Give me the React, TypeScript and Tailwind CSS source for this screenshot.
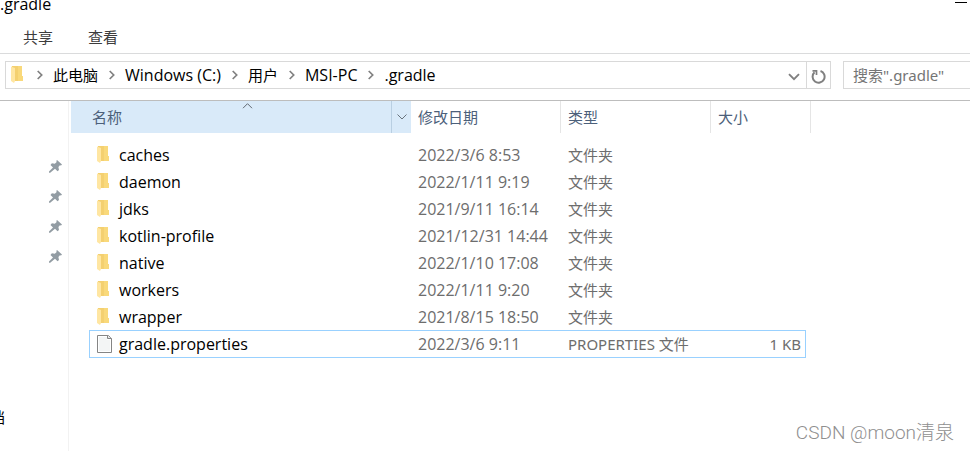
import React from "react";

type Entry = { name: string; date: string; type: string; size?: string; file?: boolean };

const entries: Entry[] = [
  { name: "caches", date: "2022/3/6 8:53", type: "文件夹" },
  { name: "daemon", date: "2022/1/11 9:19", type: "文件夹" },
  { name: "jdks", date: "2021/9/11 16:14", type: "文件夹" },
  { name: "kotlin-profile", date: "2021/12/31 14:44", type: "文件夹" },
  { name: "native", date: "2022/1/10 17:08", type: "文件夹" },
  { name: "workers", date: "2022/1/11 9:20", type: "文件夹" },
  { name: "wrapper", date: "2021/8/15 18:50", type: "文件夹" },
  { name: "gradle.properties", date: "2022/3/6 9:11", type: "PROPERTIES 文件", size: "1 KB", file: true },
];

const crumbs = [
  { label: "此电脑", size: "text-[15px]" },
  { label: "Windows (C:)", size: "text-[16px]" },
  { label: "用户", size: "text-[15px]" },
  { label: "MSI-PC", size: "text-[16px]" },
  { label: ".gradle", size: "text-[16px]" },
];

function FolderIcon() {
  return (
    <svg className="shrink-0" width="13" height="18" viewBox="0 0 13 18" aria-hidden="true">
      <path d="M1 0h10v10h1v5H1z" fill="#f4d070" />
      <path d="M7 0h4v10h1v5H7z" fill="#f9d97b" />
      <path d="M0 0.500l4 1.500v13l-1 2L0 15z" fill="#ffe6a2" />
    </svg>
  );
}

function FileIcon() {
  return (
    <svg className="shrink-0" width="15" height="18" viewBox="0 0 15 18" aria-hidden="true">
      <path d="M0.500 0.500h11l3 3v14h-14z" fill="#fff" stroke="#858585" />
      <path d="M2 2h8v3h3v11H2z" fill="#f3f5f5" />
      <path d="M10.500 0.500v3h4" fill="#e6e6e6" stroke="#858585" />
    </svg>
  );
}

function PinIcon() {
  return (
    <svg width="13" height="13" viewBox="0 0 13 13" aria-hidden="true">
      <path
        d="M8 0l5 4.500-1 0.900-1.100-0.200-1.500 1.700 0.600 3-1.500 1.400-2.500-2.500L1.200 12.800H0V11.600l4-4.100L1.500 5l1.400-1.700 2.900 0.500 1.900-1.700-0.400-1.200z"
        fill="#929ca3"
      />
    </svg>
  );
}

function Chevron() {
  return (
    <svg className="shrink-0" width="6" height="10" viewBox="0 0 6 10" fill="none" aria-hidden="true">
      <path d="M0.700 1l4 4-4 4" stroke="#808080" strokeWidth="1.700" />
    </svg>
  );
}

export default function App() {
  return (
    <div className="flex min-h-screen flex-col overflow-hidden bg-white font-['Open_Sans','Noto_Sans_CJK_SC',sans-serif] text-[15px] leading-5 text-black">
      <header className="flex h-5 items-start justify-between pr-[3px]">
        <h1 className="-mt-1.5 text-[16px] leading-5">.gradle</h1>
        <button type="button" aria-label="最小化" className="flex h-[3px] w-3 items-end">
          <span className="h-px w-full bg-black" />
        </button>
      </header>

      <nav className="flex h-[34px] items-center gap-[35px] border-b border-[#dadbdc] pl-[23px] text-[#3c3c3c]">
        <button type="button">共享</button>
        <button type="button">查看</button>
      </nav>

      <div className="flex h-[47px] items-center gap-3 border-b border-[#bdbdbd] pb-1 pl-[5px]">
        <div className="flex h-7 flex-1 items-center border border-[#d9d9d9]">
          <div className="flex flex-1 items-center pl-[5px]">
            <FolderIcon />
            <ol className="flex items-center gap-[11px] pl-[13px]">
              {crumbs.map((crumb) => (
                <li key={crumb.label} className="flex items-center gap-2.5">
                  <Chevron />
                  <button type="button" className={crumb.size}>
                    {crumb.label}
                  </button>
                </li>
              ))}
            </ol>
          </div>
          <button type="button" aria-label="历史记录" className="flex h-full w-6 items-center justify-center pt-1">
            <svg width="12" height="8" viewBox="0 0 12 8" fill="none" aria-hidden="true">
              <path d="M1 1.200l5 5 5-5" stroke="#808080" strokeWidth="1.900" />
            </svg>
          </button>
          <button
            type="button"
            aria-label="刷新"
            className="flex h-full w-6 items-center justify-center border-l border-[#d9d9d9] pt-0.5"
          >
            <svg width="15" height="15" viewBox="0 0 15 15" fill="none" aria-hidden="true">
              <path d="M9.500 2a6 6 0 1 1-6 1.300" stroke="#808080" strokeWidth="2" />
              <path d="M1.500 1.800h4V6" stroke="#808080" strokeWidth="1.700" />
            </svg>
          </button>
        </div>
        <input
          type="search"
          aria-label="搜索"
          placeholder={'搜索".gradle"'}
          className="h-7 w-[127px] border border-r-0 border-[#d9d9d9] pl-[9px] font-['Noto_Sans','Noto_Sans_CJK_SC',sans-serif] placeholder:text-[#757575]"
        />
      </div>

      <main className="flex flex-1">
        <aside className="flex w-[69px] shrink-0 flex-col overflow-hidden border-r border-[#f2f2f2] pt-[50px]">
          <ul>
            {[1, 2, 3, 4].map((n) => (
              <li key={n} className="flex h-[30px] items-center justify-end pr-1.5">
                <PinIcon />
              </li>
            ))}
          </ul>
          <div className="mt-[136px] flex w-[5px] justify-end overflow-hidden whitespace-nowrap">文档</div>
        </aside>

        <section className="flex flex-1 flex-col pl-0.5">
          <table className="w-[740px] table-fixed border-separate border-spacing-0 text-left">
            <colgroup>
              <col className="w-[340px]" />
              <col className="w-[150px]" />
              <col className="w-[150px]" />
              <col className="w-[100px]" />
            </colgroup>
            <thead className="text-[#4c607a]">
              <tr className="h-8">
                <th className="bg-[#d9eaf9] p-0 font-normal">
                  <div className="relative flex h-8 items-center">
                    <span className="flex-1 pl-[21px]">名称</span>
                    <svg
                      className="absolute left-[171px] top-0.5"
                      width="11"
                      height="6"
                      viewBox="0 0 11 6"
                      fill="none"
                      aria-hidden="true"
                    >
                      <path d="M1 5.200l4.500-4.500L10 5.200" stroke="#606870" />
                    </svg>
                    <button
                      type="button"
                      aria-label="筛选名称"
                      className="flex h-full w-5 items-center justify-center border-l border-[#b9cfe2]"
                    >
                      <svg width="10" height="6" viewBox="0 0 10 6" fill="none" aria-hidden="true">
                        <path d="M0.500 0.500L5 5l4.500-4.500" stroke="#68737d" />
                      </svg>
                    </button>
                  </div>
                </th>
                <th className="border-r border-[#e5e5e5] p-0 pl-[7px] font-normal">修改日期</th>
                <th className="border-r border-[#e5e5e5] p-0 pl-[7px] font-normal">类型</th>
                <th className="border-r border-[#e5e5e5] p-0 pl-[7px] font-normal">大小</th>
              </tr>
            </thead>
            <tbody className="text-[#6d6d6d]">
              <tr aria-hidden="true" className="h-2">
                <td colSpan={4} className="p-0" />
              </tr>
              {entries.map((e) => {
                const line = e.file ? "border-[#99d1ff]" : "border-transparent";
                const box = e.file ? "h-7 border-y" : "h-[27px]";
                return (
                  <tr key={e.name}>
                    <td className="p-0 pl-[18px]">
                      <div className={`flex items-center border-l text-[16px] text-black ${box} ${line}`}>
                        <span className="flex w-[29px] pl-[7px]">{e.file ? <FileIcon /> : <FolderIcon />}</span>
                        {e.name}
                      </div>
                    </td>
                    <td className="p-0">
                      <div className={`flex items-center pl-[7px] text-[16px] ${box} ${line}`}>{e.date}</div>
                    </td>
                    <td className="p-0 font-['Noto_Sans','Noto_Sans_CJK_SC',sans-serif]">
                      <div className={`flex items-center pl-[7px] ${box} ${line}`}>{e.type}</div>
                    </td>
                    <td className="p-0 pr-[5px] font-['Noto_Sans','Noto_Sans_CJK_SC',sans-serif]">
                      <div className={`flex items-center justify-end border-r pr-1 ${box} ${line}`}>{e.size}</div>
                    </td>
                  </tr>
                );
              })}
            </tbody>
          </table>
          <p className="mt-auto pb-1.5 pr-4 text-right font-['Roboto','Noto_Sans_CJK_SC',sans-serif] text-[19px] leading-6 font-light text-[#8f8f8f]">
            CSDN @moon清泉
          </p>
        </section>
      </main>
    </div>
  );
}
